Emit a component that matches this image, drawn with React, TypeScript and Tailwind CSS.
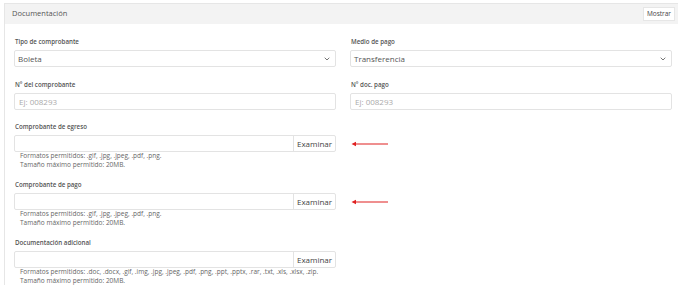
const font = "font-['Open_Sans',sans-serif]";

function Label({ children }: { children: React.ReactNode }) {
  return (
    <p className="h-[9px] leading-[9px] text-[6.2px] font-semibold text-[#555] pl-px">
      {children}
    </p>
  );
}

function SelectBox({ value }: { value: string }) {
  return (
    <div className="mt-[4px] h-[17px] border border-[#e3e3e3] rounded-[2px] flex items-center justify-between pl-[3px] pr-[4px]">
      <span className="text-[8px] text-[#555]">{value}</span>
      <svg width="6" height="4" viewBox="0 0 6 4" className="mr-px">
        <path d="M0.7 0.7 L3 3 L5.3 0.7" fill="none" stroke="#666" strokeWidth="0.9" />
      </svg>
    </div>
  );
}

function TextInput() {
  return (
    <div className="mt-[4px] h-[17px] border border-[#e3e3e3] rounded-[2px] flex items-center pl-[4px]">
      <span className="text-[8px] text-[#aaa]">Ej: 008293</span>
    </div>
  );
}

function FileInput({ formats }: { formats: string }) {
  return (
    <div>
      <div className="mt-[4px] h-[17px] border border-[#e3e3e3] rounded-[2px] flex">
        <div className="flex-1" />
        <div className="w-[42px] border-l border-[#e3e3e3] flex items-center justify-center text-[8px] text-[#444]">
          Examinar
        </div>
      </div>
      <div className="pl-[6px] text-[6.5px] leading-[8.5px] text-[#666]">
        <p>Formatos permitidos: {formats}</p>
        <p>Tamaño máximo permitido: 20MB.</p>
      </div>
    </div>
  );
}

function Arrow() {
  return (
    <div className="pt-[13px]">
      <div className="h-[17px] flex items-center pl-px">
        <svg width="38" height="6" viewBox="0 0 38 6">
          <path d="M4 3 H37" stroke="#e02020" strokeWidth="1.2" />
          <path d="M0.5 3 L5 0.8 L5 5.2 Z" fill="#e02020" />
        </svg>
      </div>
    </div>
  );
}

export default function App() {
  return (
    <div className={`${font} w-[678px] h-[285px] overflow-hidden bg-white pt-[3px] pl-[4px]`}>
      <div className="w-[690px] h-[300px] border border-[#e6e6e6]">
        <div className="h-[20px] bg-[#f3f3f3] flex items-center justify-between pl-[7px] pr-[18px]">
          <span className="text-[7.5px] text-[#555]">Documentación</span>
          <div className="h-[14px] px-[3px] bg-white border border-[#e6e6e6] flex items-center text-[6.5px] text-[#444]">
            Mostrar
          </div>
        </div>

        <div className="w-[676px] px-[9px] pt-[13px]">
          <div className="grid grid-cols-2 gap-x-[14px]">
            <div>
              <Label>Tipo de comprobante</Label>
              <SelectBox value="Boleta" />
            </div>
            <div>
              <Label>Medio de pago</Label>
              <SelectBox value="Transferencia" />
            </div>
          </div>

          <div className="grid grid-cols-2 gap-x-[14px] mt-[13px]">
            <div>
              <Label>N° del comprobante</Label>
              <TextInput />
            </div>
            <div>
              <Label>N° doc. pago</Label>
              <TextInput />
            </div>
          </div>

          <div className="grid grid-cols-2 gap-x-[14px] mt-[12px]">
            <div>
              <Label>Comprobante de egreso</Label>
              <FileInput formats=".gif, .jpg, .jpeg, .pdf, .png." />
            </div>
            <Arrow />
          </div>

          <div className="grid grid-cols-2 gap-x-[14px] mt-[11px]">
            <div>
              <Label>Comprobante de pago</Label>
              <FileInput formats=".gif, .jpg, .jpeg, .pdf, .png." />
            </div>
            <Arrow />
          </div>

          <div className="grid grid-cols-2 gap-x-[14px] mt-[11px]">
            <div>
              <Label>Documentación adicional</Label>
              <FileInput formats=".doc, .docx, .gif, .img, .jpg, .jpeg, .pdf, .png, .ppt, .pptx, .rar, .txt, .xls, .xlsx, .zip." />
            </div>
          </div>
        </div>
      </div>
    </div>
  );
}
